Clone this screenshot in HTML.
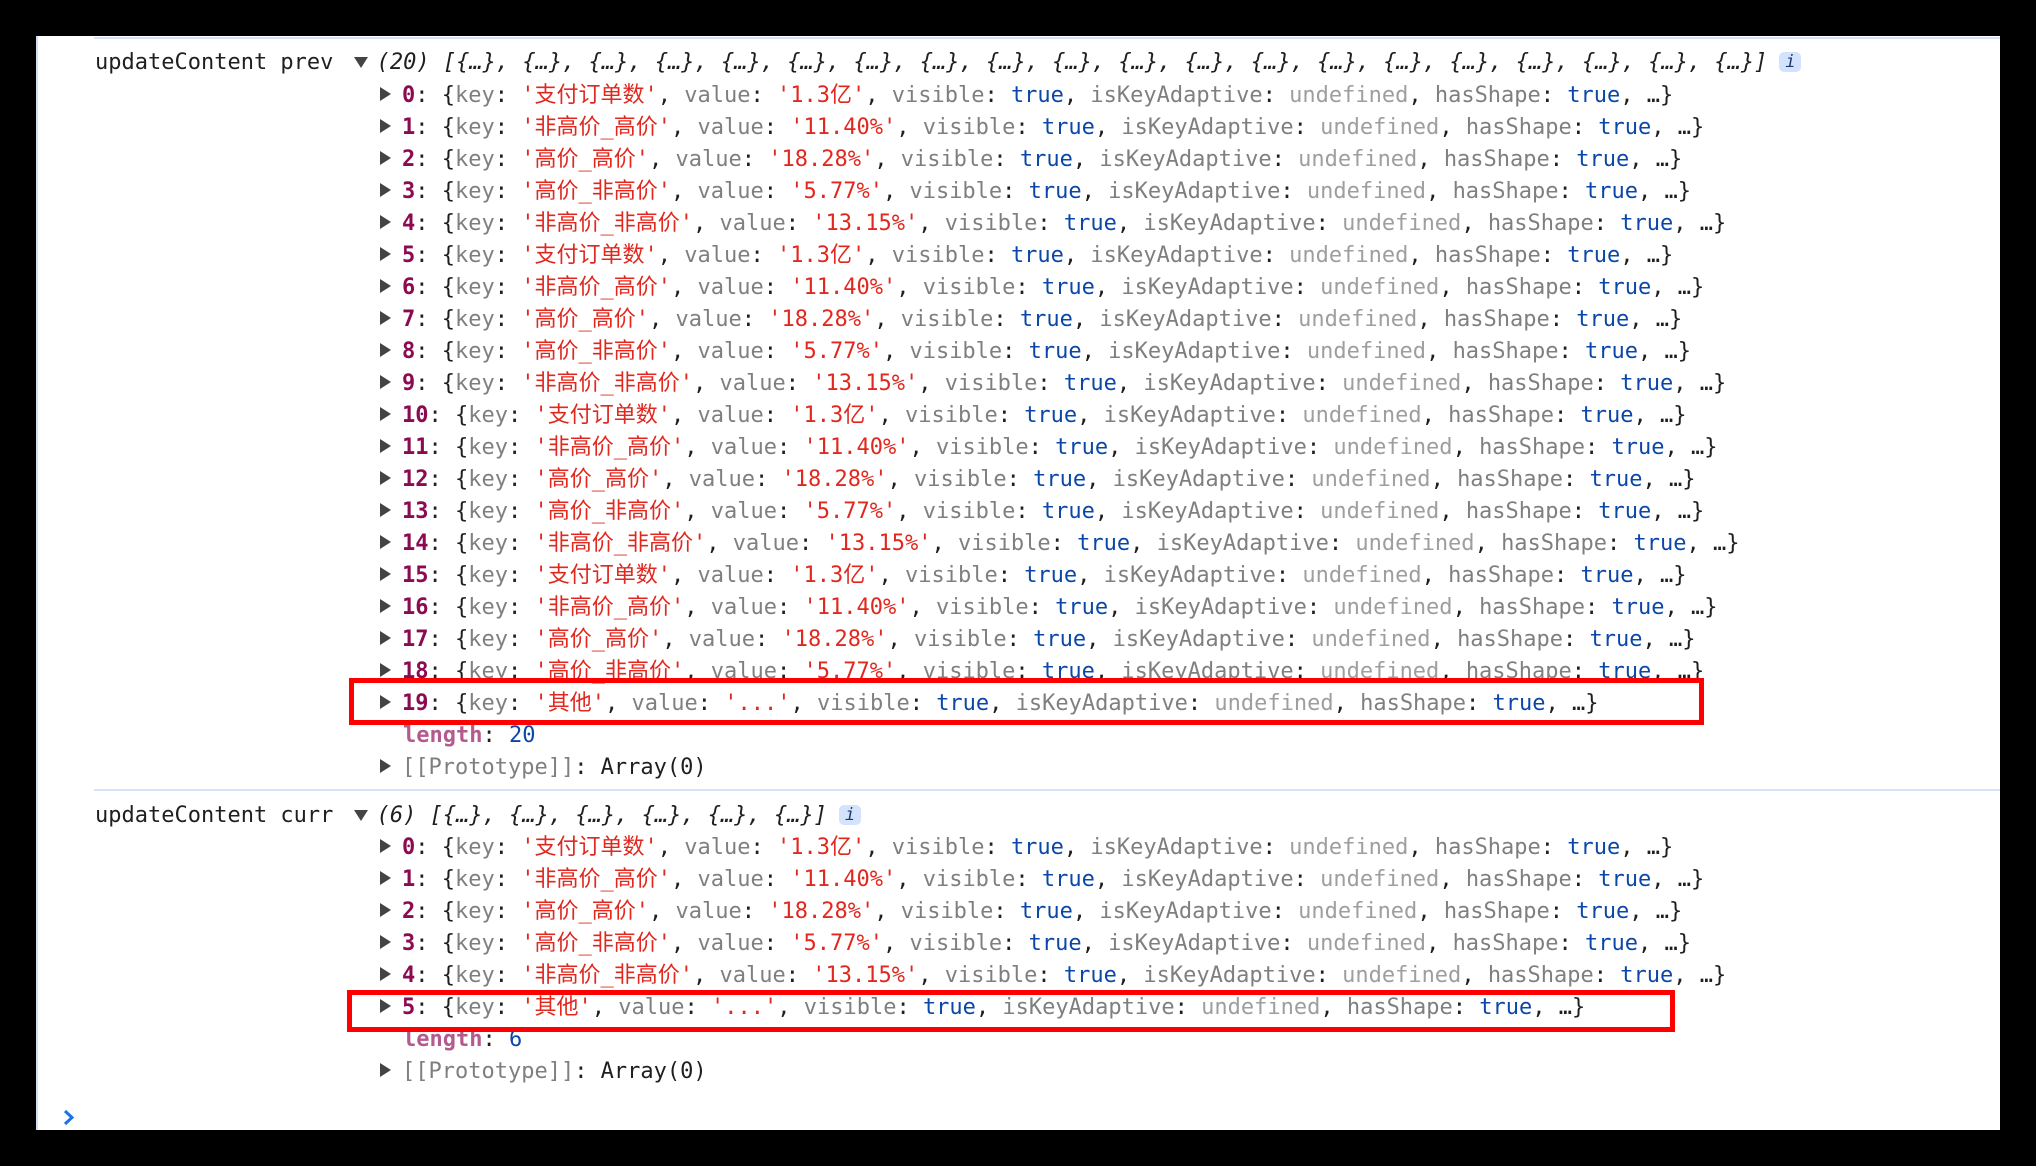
<!DOCTYPE html>
<html><head><meta charset="utf-8">
<style>
html,body{margin:0;padding:0;background:#000;width:2036px;height:1166px;overflow:hidden}
#p{position:absolute;left:36px;top:36px;width:1964px;height:1094px;background:#fff;border-left:2px solid #cfe0f7;box-sizing:border-box}
.l{position:absolute;white-space:pre;font-family:"DejaVu Sans Mono","Liberation Mono","Noto Sans CJK SC",monospace;font-size:22px;line-height:32px;height:32px;color:#1f1f1f}
.k{color:#7f7f7f}.s{color:#e0281f}.t{color:#0b47a8}.u{color:#9e9e9e}.i{color:#8b0a50;font-weight:bold}
.len{color:#b55a8e;font-weight:bold}
.tri{display:inline-block;width:0;height:0;border-top:7px solid transparent;border-bottom:7px solid transparent;border-left:11px solid #444;margin-right:11px;vertical-align:1px}
.trd{display:inline-block;width:0;height:0;border-left:7px solid transparent;border-right:7px solid transparent;border-top:11px solid #444;vertical-align:1px;margin-right:9px;margin-left:7px}
.sep{position:absolute;height:2px;background:#d3e3f9}
.box{position:absolute;border:5px solid #ff0000;box-sizing:border-box}
.bd{display:inline-block;width:22px;height:20px;background:#d3e3fd;border-radius:5px;text-align:center;line-height:20px;font-size:17px;color:#1f3a6a;font-style:italic;vertical-align:2px;margin-left:12px}
</style></head><body>
<div id="p"></div>
<div class="sep" style="left:94px;top:37px;width:1906px"></div>
<div class="sep" style="left:94px;top:789px;width:1906px"></div>
<div id="c"></div>
<div class="box" style="left:349px;top:678px;width:1355px;height:47px"></div>
<div class="box" style="left:347px;top:990px;width:1328px;height:42px"></div>
<svg style="position:absolute;left:62px;top:1109px" width="14" height="17" viewBox="0 0 14 17"><path d="M3 2 L10 8.5 L3 15" fill="none" stroke="#1a73e8" stroke-width="3"/></svg>
<script>
var K=[["支付订单数","1.3亿"],["非高价_高价","11.40%"],["高价_高价","18.28%"],["高价_非高价","5.77%"],["非高价_非高价","13.15%"]];
var h='';
function L(x,y,html){h+='<div class="l" style="left:'+x+'px;top:'+(y-15)+'px">'+html+'</div>';}
function row(y,i,k,v){L(380,y,'<span class="tri"></span><span class="i">'+i+'</span>: {<span class="k">key</span>: <span class="s">\''+k+'\'</span>, <span class="k">value</span>: <span class="s">\''+v+'\'</span>, <span class="k">visible</span>: <span class="t">true</span>, <span class="k">isKeyAdaptive</span>: <span class="u">undefined</span>, <span class="k">hasShape</span>: <span class="t">true</span>, …}');}
function hdr(y,name,n){var a=[];for(var j=0;j<n;j++)a.push('{…}');L(95,y,name+' <span class="trd"></span><i>('+n+') ['+a.join(', ')+']</i><span class="bd">i</span>');}
hdr(62,'updateContent prev',20);
for(var i=0;i<20;i++){var kv=i==19?['其他','...']:K[i%5];row(95+32*i,i,kv[0],kv[1]);}
L(403,735,'<span class="len">length</span>: <span class="t">20</span>');
L(380,767,'<span class="tri"></span><span class="k">[[Prototype]]</span>: Array(0)');
hdr(815,'updateContent curr',6);
for(var i=0;i<6;i++){var kv=i==5?['其他','...']:K[i];row(847+32*i,i,kv[0],kv[1]);}
L(403,1039,'<span class="len">length</span>: <span class="t">6</span>');
L(380,1071,'<span class="tri"></span><span class="k">[[Prototype]]</span>: Array(0)');
document.getElementById('c').innerHTML=h;
</script>
</body></html>
